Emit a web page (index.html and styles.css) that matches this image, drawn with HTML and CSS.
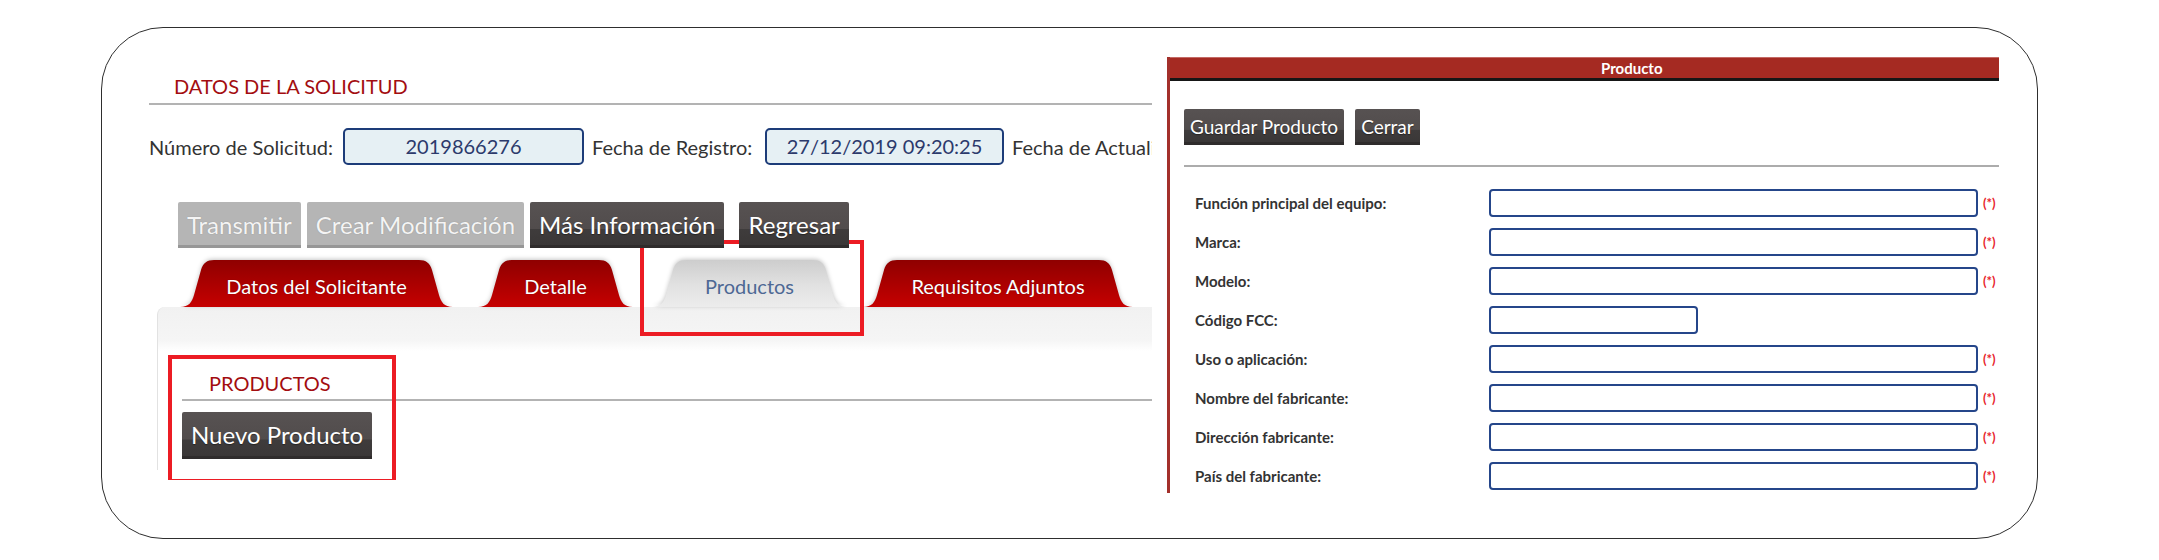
FILE: index.html
```html
<!DOCTYPE html>
<html lang="es">
<head>
<meta charset="utf-8">
<title>Productos</title>
<link rel="stylesheet" href="styles.css">
</head>
<body>
<svg class="defs" aria-hidden="true">
  <defs>
    <linearGradient id="tabRed" x1="0" y1="0" x2="0" y2="1">
      <stop offset="0" stop-color="#8f0000"/>
      <stop offset="1" stop-color="#c60000"/>
    </linearGradient>
    <linearGradient id="tabGrey" x1="0" y1="0" x2="0" y2="1">
      <stop offset="0" stop-color="#cdcdcd"/>
      <stop offset="0.55" stop-color="#e2e2e2"/>
      <stop offset="1" stop-color="#ececec"/>
    </linearGradient>
  </defs>
</svg>
<div class="frame">
  <section class="main">
    <h2 class="sec-title">DATOS DE LA SOLICITUD</h2>
    <div class="info-row">
      <span class="lbl l1">Número de Solicitud:</span>
      <div class="ro w1">2019866276</div>
      <span class="lbl l2">Fecha de Registro:</span>
      <div class="ro w2">27/12/2019 09:20:25</div>
      <span class="lbl l3">Fecha de Actualización:</span>
    </div>
    <div class="actions">
      <button class="btn btn-off">Transmitir</button>
      <button class="btn btn-off">Crear Modificación</button>
      <button class="btn">Más Información</button>
      <button class="btn btn-back">Regresar</button>
    </div>
    <div class="tabs">
      <div class="tab tab-1">
        <svg viewBox="0 0 273 47" preserveAspectRatio="none"><path fill="url(#tabRed)" d="M0,47 C9,47 12,42 14,35 L21,10 C23,3 27,0 34,0 L239,0 C246,0 250,3 252,10 L259,35 C261,42 264,47 273,47Z"/></svg>
        <span>Datos del Solicitante</span>
      </div>
      <div class="tab tab-2">
        <svg viewBox="0 0 155 47" preserveAspectRatio="none"><path fill="url(#tabRed)" d="M0,47 C9,47 12,42 14,35 L21,10 C23,3 27,0 34,0 L121,0 C128,0 132,3 134,10 L141,35 C143,42 146,47 155,47Z"/></svg>
        <span>Detalle</span>
      </div>
      <div class="tab tab-3">
        <svg viewBox="0 0 195 47" preserveAspectRatio="none"><path fill="url(#tabGrey)" d="M0,47 C9,47 12,42 14,35 L21,10 C23,3 27,0 34,0 L161,0 C168,0 172,3 174,10 L181,35 C183,42 186,47 195,47Z"/></svg>
        <span>Productos</span>
      </div>
      <div class="tab tab-4">
        <svg viewBox="0 0 270 47" preserveAspectRatio="none"><path fill="url(#tabRed)" d="M0,47 C9,47 12,42 14,35 L21,10 C23,3 27,0 34,0 L236,0 C243,0 247,3 249,10 L256,35 C258,42 261,47 270,47Z"/></svg>
        <span>Requisitos Adjuntos</span>
      </div>
    </div>
    <div class="tab-panel">
      <div class="prod-section">
        <h3 class="sec-title sub">PRODUCTOS</h3>
        <button class="btn btn-lg">Nuevo Producto</button>
      </div>
    </div>
  </section>

  <section class="dialog">
    <div class="dlg-head">Producto</div>
    <div class="dlg-body">
      <div class="dlg-actions">
        <button class="btn btn-sm">Guardar Producto</button>
        <button class="btn btn-sm">Cerrar</button>
      </div>
      <div class="dlg-rule"></div>
      <div class="form">
        <div class="row"><label>Función principal del equipo:</label><input class="fld" type="text"><span class="req">(*)</span></div>
        <div class="row"><label>Marca:</label><input class="fld" type="text"><span class="req">(*)</span></div>
        <div class="row"><label>Modelo:</label><input class="fld" type="text"><span class="req">(*)</span></div>
        <div class="row"><label>Código FCC:</label><input class="fld short" type="text"></div>
        <div class="row"><label>Uso o aplicación:</label><input class="fld" type="text"><span class="req">(*)</span></div>
        <div class="row"><label>Nombre del fabricante:</label><input class="fld" type="text"><span class="req">(*)</span></div>
        <div class="row"><label>Dirección fabricante:</label><input class="fld" type="text"><span class="req">(*)</span></div>
        <div class="row"><label>País del fabricante:</label><input class="fld" type="text"><span class="req">(*)</span></div>
      </div>
    </div>
  </section>
</div>
</body>
</html>
```

FILE: styles.css
```css
* { box-sizing: border-box; }
html, body { margin: 0; background: #fff; }
body {
  font-family: Lato, "Open Sans", "Liberation Sans", sans-serif;
  width: 2159px;
  height: 560px;
  overflow: hidden;
}
.defs { position: absolute; width: 0; height: 0; }

.frame {
  margin: 27px 0 0 101px;
  width: 1937px;
  height: 512px;
  border: 1px solid #2e2e2e;
  border-radius: 62px;
  display: flex;
  align-items: flex-start;
}

/* ---------- left: solicitud ---------- */
.main {
  flex: none;
  width: 1003px;
  margin-left: 47px;
  padding: 46px 0 10px;
  overflow: hidden;
}
.sec-title {
  margin: 0;
  font-size: 20px;
  line-height: 24px;
  font-weight: 400;
  color: #a30d10;
  padding: 0 0 5px 25px;
  border-bottom: 2px solid #b3b3b3;
  white-space: nowrap;
}
.info-row {
  display: flex;
  align-items: center;
  height: 37px;
  margin-top: 23px;
  white-space: nowrap;
}
.lbl { font-size: 20px; line-height: 24px; color: #333; flex: none; }
.l1 { width: 194px; }
.l2 { width: 173px; margin-left: 8px; }
.l3 { margin-left: 8px; }
.ro {
  flex: none;
  height: 37px;
  border: 2px solid #1d3c79;
  border-radius: 5px;
  background: #e6f0f4;
  color: #2c3a6c;
  font-size: 20px;
  line-height: 33px;
  text-align: center;
}
.w1 { width: 241px; }
.w2 { width: 239px; }

.actions {
  position: relative;
  z-index: 3;
  display: flex;
  gap: 6px;
  margin: 37px 0 0 29px;
}
.btn {
  font-family: inherit;
  font-size: 24px;
  height: 46px;
  line-height: 41px;
  padding: 2px 9px 0;
  border: 0;
  border-bottom: 3px solid #2f2c2c;
  border-radius: 2px 2px 0 0;
  color: #fff;
  background: linear-gradient(#575252 0, #514c4c 62%, #3f3c3c 63%, #3a3737 100%);
  text-shadow: 0 1px 1px rgba(0, 0, 0, .4);
  white-space: nowrap;
  flex: none;
}
.btn-off {
  background: #b5b5b5;
  border-bottom-color: #979797;
  color: #f4f4f4;
  text-shadow: 0 0 1px rgba(0, 0, 0, .25);
}
.btn-back { margin-left: 9px; }

.tabs {
  display: flex;
  height: 47px;
  margin: 12px 0 0 31px;
}
.tab {
  position: relative;
  flex: none;
  height: 47px;
  padding-top: 5px;
  line-height: 42px;
  font-size: 20px;
  text-align: center;
  color: #fff;
  white-space: nowrap;
}
.tab svg {
  position: absolute;
  left: 0;
  top: 0;
  width: 100%;
  height: 100%;
  filter: drop-shadow(0 -1px 2px rgba(0, 0, 0, .22));
}
.tab span { position: relative; text-shadow: 0 0 1px rgba(0, 0, 0, .4); }
.tab-1 { width: 273px; }
.tab-2 { width: 155px; margin-left: 25px; }
.tab-3 { width: 195px; margin-left: 19px; color: #4d6894; }
.tab-3 span { text-shadow: none; }
.tab-4 { width: 270px; margin-left: 16px; }
.tab-3::after {
  content: "";
  position: absolute;
  left: -12px;
  top: -20px;
  width: 216px;
  height: 88px;
  border: 4px solid #ec1c24;
}

.tab-panel {
  margin-left: 8px;
  padding: 64px 0 11px 24px;
  border-left: 1px solid #e2e2e2;
  border-top-left-radius: 8px;
  background: linear-gradient(#f1f1f1 0, #f5f5f5 33px, #fff 44px);
}
.prod-section { position: relative; }
.prod-section::after {
  content: "";
  position: absolute;
  left: -14px;
  top: -16px;
  width: 220px;
  height: 120px;
  border: 4px solid #ec1c24;
}
.sec-title.sub { padding: 0 0 4px 27px; }
.btn-lg { margin-top: 11px; height: 47px; line-height: 42px; }

/* ---------- right: dialog ---------- */
.dialog {
  flex: none;
  width: 832px;
  height: 436px;
  margin: 29px 0 0 15px;
  border-left: 3px solid #a3302b;
}
.dlg-head {
  height: 24px;
  background: #a52a22;
  border-top: 1px solid #c46a65;
  border-bottom: 3px solid #161616;
  color: #fff;
  font-size: 15px;
  font-weight: 700;
  line-height: 21px;
  padding-left: 431px;
}
.dlg-body { padding: 28px 0 0 14px; }
.dlg-actions { display: flex; gap: 11px; }
.btn-sm { font-size: 19px; height: 36px; line-height: 31px; padding: 2px 6px 0; }
.dlg-rule { margin-top: 20px; height: 2px; background: #acacac; }
.form {
  margin-top: 22px;
  display: flex;
  flex-direction: column;
  gap: 11px;
}
.row { display: flex; align-items: center; height: 28px; }
.row label {
  flex: none;
  width: 305px;
  padding-left: 11px;
  font-size: 15px;
  font-weight: 700;
  color: #333;
  white-space: nowrap;
}
.fld {
  flex: none;
  width: 489px;
  height: 28px;
  border: 2px solid #25468a;
  border-radius: 4px;
  background: #fff;
  margin: 0;
}
.fld.short { width: 209px; }
.req {
  margin-left: 5px;
  font-size: 13px;
  font-weight: 700;
  color: #e8232b;
}
```
